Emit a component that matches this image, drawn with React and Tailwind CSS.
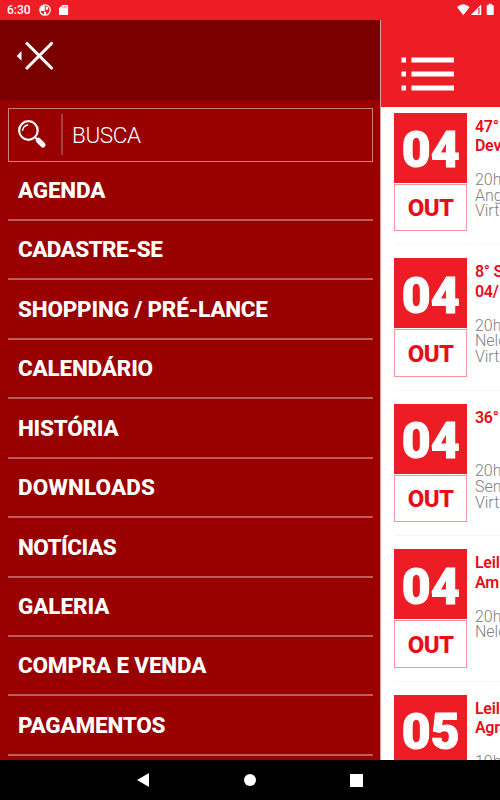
const MENU = [
  { label: "AGENDA",              spacing: "tracking-[-0.2px]" },
  { label: "CADASTRE-SE",         spacing: "tracking-[-0.6px]" },
  { label: "SHOPPING / PRÉ-LANCE", spacing: "tracking-[-0.2px]" },
  { label: "CALENDÁRIO",          spacing: "tracking-[-0.2px]" },
  { label: "HISTÓRIA",            spacing: "tracking-[-0.25px]" },
  { label: "DOWNLOADS",           spacing: "tracking-[0.1px]" },
  { label: "NOTÍCIAS",            spacing: "tracking-[-0.5px]" },
  { label: "GALERIA",             spacing: "tracking-[-0.1px]" },
  { label: "COMPRA E VENDA",      spacing: "tracking-[-0.2px]" },
  { label: "PAGAMENTOS",          spacing: "tracking-[-0.2px]" },
];

const EVENTS = [
  { day: "04", title: ["47°", "Dev"],  info: ["20h", "Ang", "Virt"] },
  { day: "04", title: ["8° S", "04/"], info: ["20h", "Nelo", "Virt"] },
  { day: "04", title: ["36°", ""],     info: ["20h", "Sen", "Virt"] },
  { day: "04", title: ["Leil", "Am"],  info: ["20h", "Nelo"] },
  { day: "05", title: ["Leil", "Agr"], info: ["19h"] },
];

export default function App() {
  return (
    <div className="flex h-[800px] w-[500px] flex-col overflow-hidden bg-white font-['Roboto',sans-serif]">
      <StatusBar />
      <div className="flex h-[740px] shrink-0 overflow-hidden">
        <Drawer />
        <Agenda />
      </div>
      <NavigationBar />
    </div>
  );
}

function StatusBar() {
  return (
    <header className="flex h-5 shrink-0 items-center bg-[#ee1c25] pl-[7px] text-white">
      <span className="w-[32px] text-[12px] font-medium leading-5">6:30</span>
      <svg className="h-3 w-3" viewBox="0 0 12 12">
        <circle cx="6" cy="6" r="5.200" fill="none" stroke="white" strokeWidth="1.300" />
        <path fill="white" d="M1 7V4L3.500 1.200H5.800V7zM6.700 2.800H9V5.800H6.700zM5 7.800H7V11H5z" />
      </svg>
      <svg className="ml-2 h-3 w-[10px]" viewBox="0 0 10 12">
        <path fill="white" d="M3.300 1H8.200q.9 0 .9.900v8.300q0 .9-.9.900H.9Q0 11.100 0 10.200V4.300z" />
        <path stroke="#ee1c25" strokeWidth=".6" d="M3.600 2.200v1.600M5.400 2.200v1.600M7.200 2.200v1.600" />
      </svg>
      <svg className="ml-auto mr-[5px] mt-px h-5 w-[38px]" viewBox="0 0 38 20">
        <path fill="white" d="M0 6Q6.300.3 12.600 6L6.300 14.200zM24.200 3.500v10.600H13.700z" />
        <path fill="#ee1c25" d="M21.300 7h1.200v6.200h-1.200z" />
        <path fill="white" d="M31.700 2.700h3v1.200h1.200q.8 0 .8.800v8.600q0 .8-.8.800h-5.400q-.8 0-.8-.8V4.700q0-.8.8-.8h1.200z" />
      </svg>
    </header>
  );
}

function Drawer() {
  return (
    <aside className="w-[380px] shrink-0 bg-[#990000]">
      <div className="h-20 bg-[#7a0000] pl-4 pt-[21px]">
        <svg className="h-[29px] w-[38px]" viewBox="0 0 38 29">
          <path fill="white" d="M5.500 10v9.800L.7 14.900z" />
          <path fill="none" stroke="white" strokeWidth="3.100" strokeLinecap="round" d="m11 2.500 24.500 24.500M35.500 2.500 11 27" />
        </svg>
      </div>

      {/* Search */}
      <div className="ml-2 mt-2 flex h-[53.500px] w-[365px] items-center border border-[#cc8080]">
        <svg className="ml-[9px] h-[30px] w-[29px]" viewBox="0 0 29 30" fill="none">
          <circle cx="10.400" cy="10.500" r="9.300" stroke="white" strokeWidth="2.200" />
          <path stroke="white" strokeWidth="1.300" d="M4.600 11Q4.900 5.500 10.200 5" />
          <path stroke="white" strokeWidth="2" d="m16.600 16.900 3 3" />
          <path stroke="white" strokeWidth="5.200" strokeLinecap="round" d="m20.300 20.300 4.600 4.600" />
        </svg>
        <span className="ml-[14px] h-[41px] w-[2px] bg-[#ad4040]" />
        <span className="ml-[9px] text-[22.500px] font-light leading-none tracking-[-0.4px] text-white">BUSCA</span>
      </div>

      <nav className="ml-2 w-[365px]">
        {MENU.map(({ label, spacing }) => (
          <div key={label} className="flex h-[59.450px] items-center border-b-2 border-[#bd5c5c] pl-[10px]">
            <span className={`whitespace-nowrap text-[22.500px] font-extrabold leading-none text-white ${spacing}`}>{label}</span>
          </div>
        ))}
      </nav>
    </aside>
  );
}

function Agenda() {
  return (
    <main className="w-[120px] shrink-0 overflow-hidden border-l border-[#d9a0a0] bg-white">
      <div className="-ml-px h-[86.500px] bg-[#ee1c25] pl-[21px] pt-[36.500px]">
        <svg className="h-[34px] w-[54px]" viewBox="0 0 54 34" fill="white">
          <path d="M.5.500h4.500v5H.5zM10.500.500h42.500v5H10.500zM.5 14.500h4.500v5H.5zM10.500 14.500h42.500v5H10.500zM.5 28.500h4.500v5H.5zM10.500 28.500h42.500v5H10.500z" />
        </svg>
      </div>
      <div className="pt-[6px]">
        {EVENTS.map((event, i) => (
          <EventRow key={i} {...event} />
        ))}
      </div>
    </main>
  );
}

function EventRow({ day, title, info }) {
  return (
    <article className="ml-[13px] flex h-[145.600px] w-[180px]">
      <div className="w-[73.400px] shrink-0">
        <div className="flex h-[70px] items-center justify-center bg-[#ee1c25] pt-[5px] text-[50px] font-black leading-none text-white [-webkit-text-stroke:1px_white]">{day}</div>
        <div className="mt-px flex h-[47.500px] items-center justify-center border border-[#f4969a] pt-[2px] text-[24px] font-extrabold leading-none tracking-[-0.6px] text-[#e90d18]">OUT</div>
        <div className="mt-[13px] h-px w-[180px] bg-[#f7f7f7]" />
      </div>
      <div className="ml-[7.500px] whitespace-nowrap pt-[4px]">
        {title.map((line, i) => (
          <p key={i} className="h-[19.500px] text-[16px] font-semibold leading-[19.500px] tracking-[-0.2px] text-[#e90d18]">{line}</p>
        ))}
        <div className="mt-[16.500px]">
          {info.map((line) => (
            <p key={line} className="h-[15.700px] text-[16px] font-light leading-[15.700px] text-[#808080]">{line}</p>
          ))}
        </div>
      </div>
    </article>
  );
}

function NavigationBar() {
  return (
    <footer className="flex h-10 shrink-0 items-center justify-between bg-black pl-[137px] pr-[137px]">
      <svg className="h-[14px] w-3" viewBox="0 0 12 14">
        <path fill="white" d="M12 0v14L0 7z" />
      </svg>
      <span className="h-3 w-3 rounded-full bg-white" />
      <span className="h-[13px] w-[13px] bg-white" />
    </footer>
  );
}
